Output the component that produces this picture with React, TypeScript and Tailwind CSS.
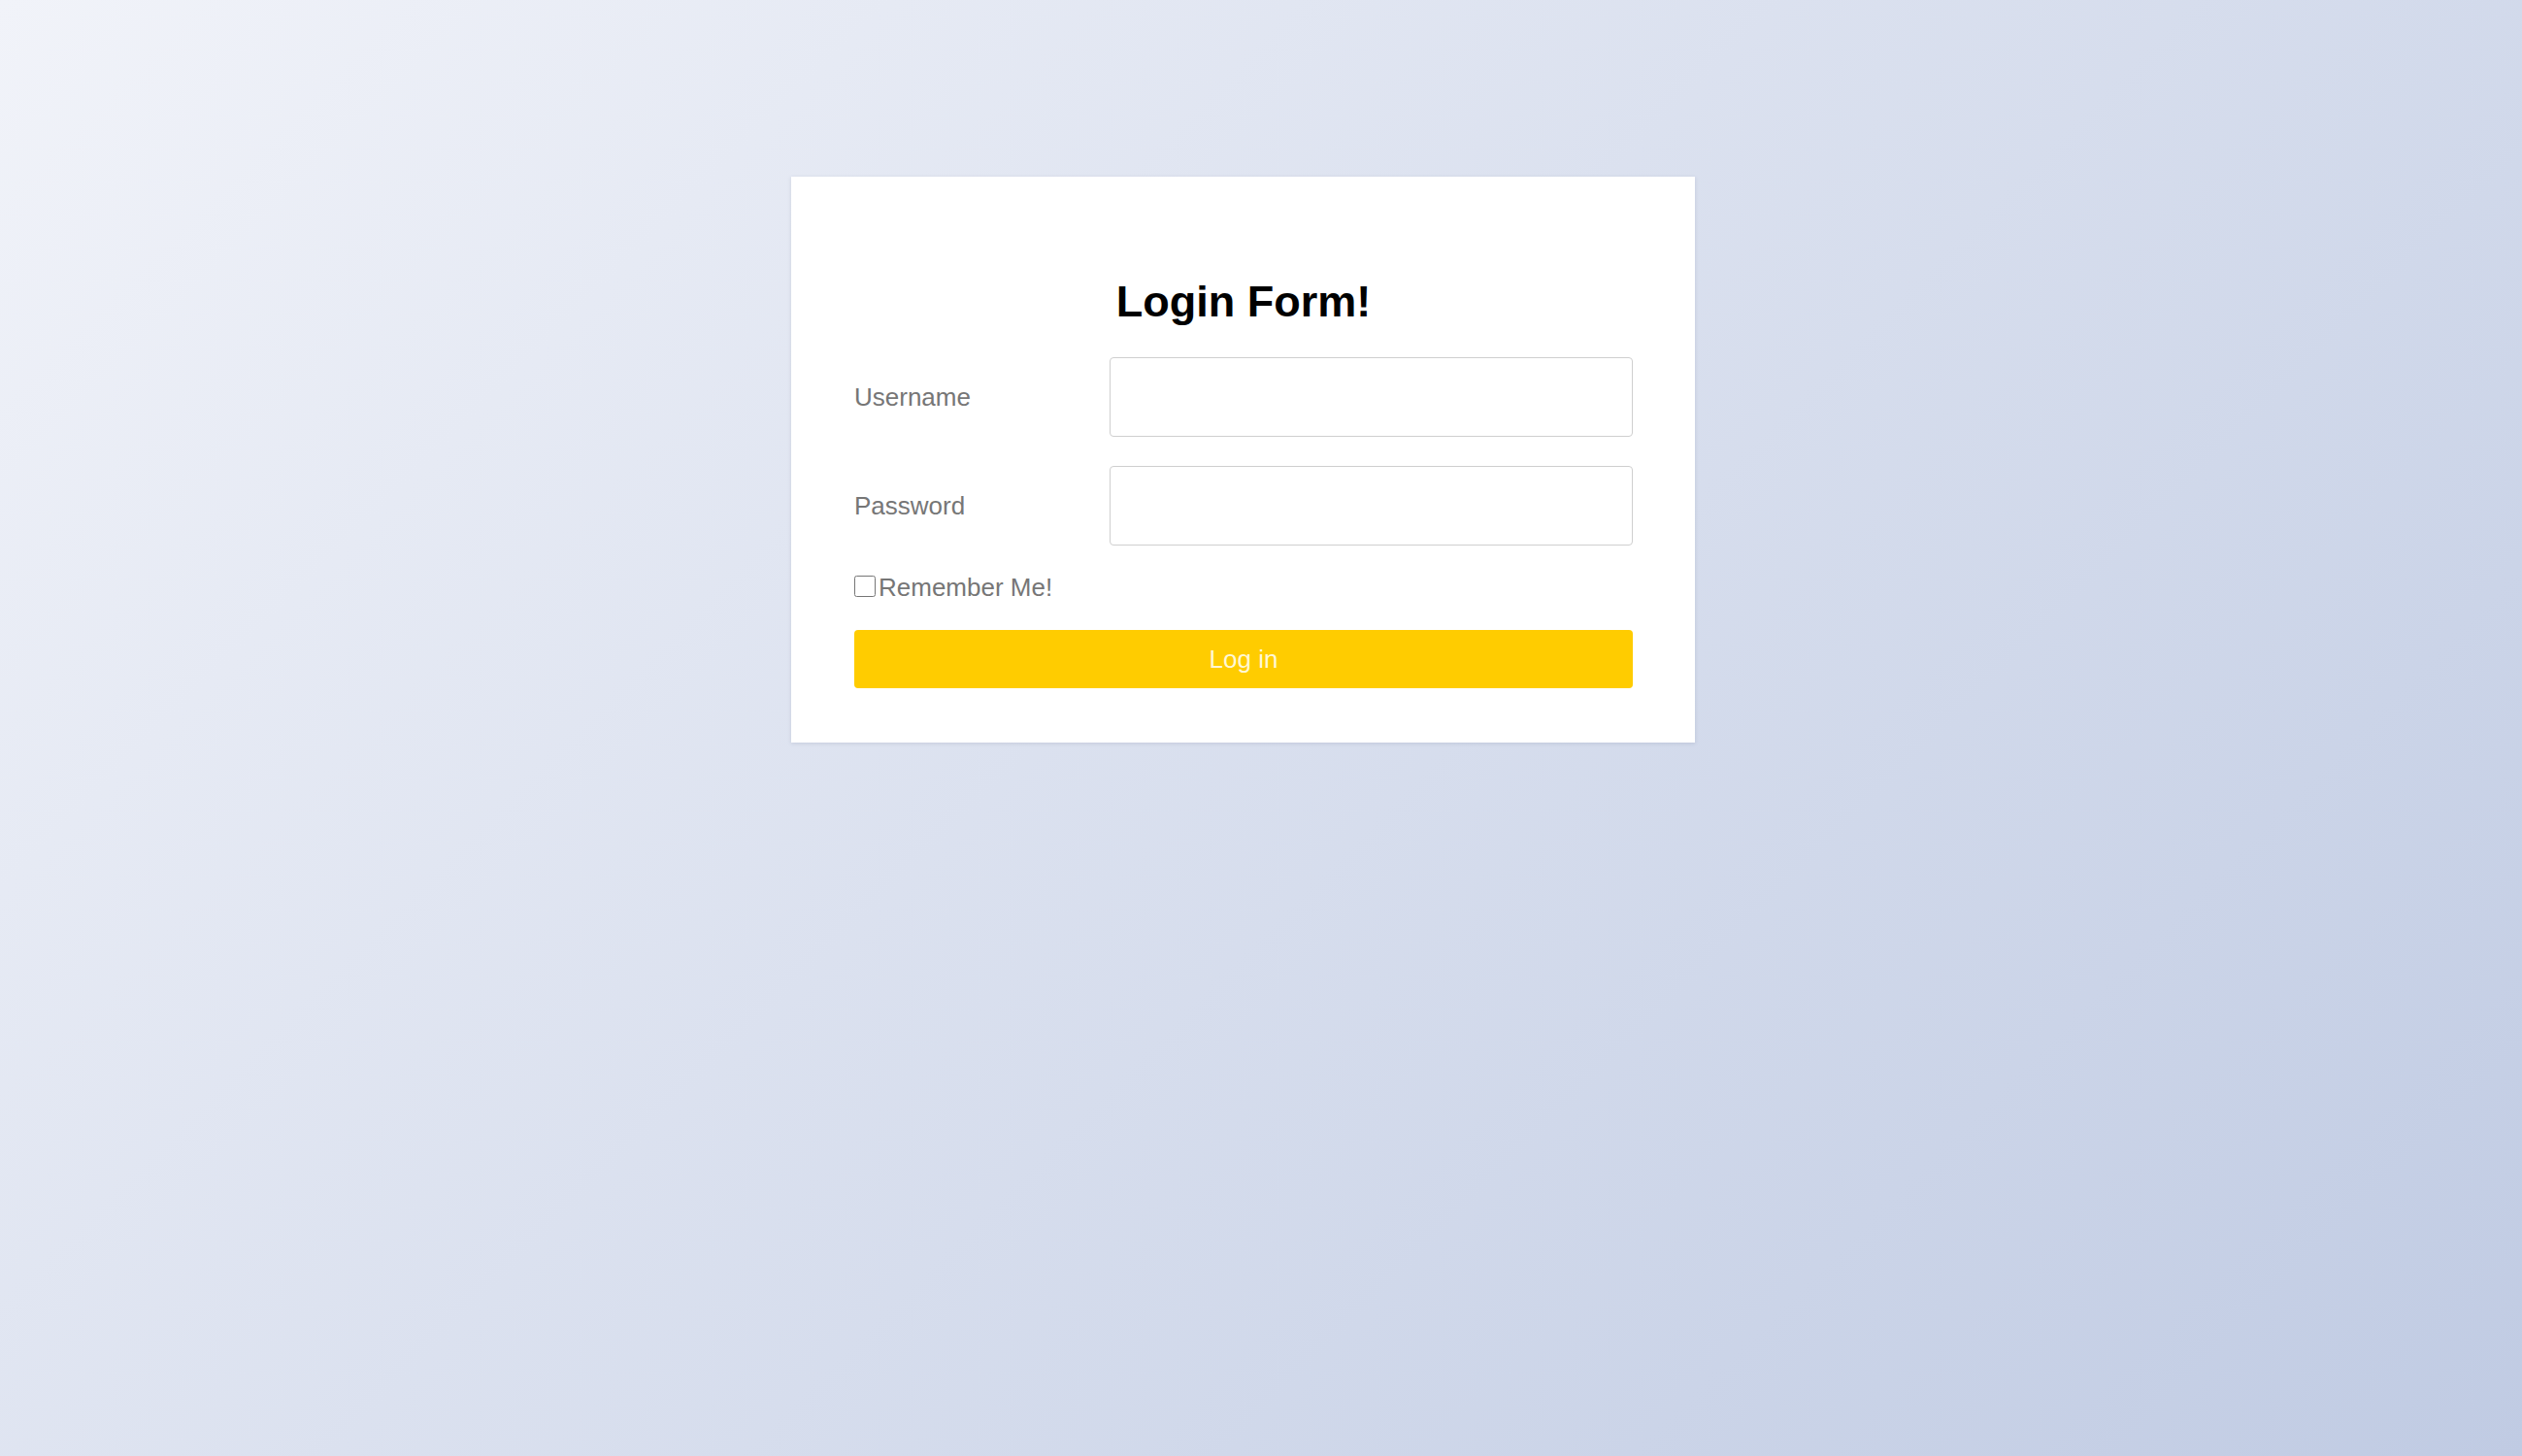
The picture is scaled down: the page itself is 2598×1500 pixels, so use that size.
const LoginPage = () => {
  return (
    <div
      className="min-h-screen w-full flex justify-center items-start pt-[182px] pr-[37px] bg-[linear-gradient(135deg,#f1f3f9_0%,#c0cbe3_100%)]"
      style={{ fontFamily: '"Liberation Sans", Arial, sans-serif' }}
    >
      <form className="w-[931px] bg-white pt-[104px] pl-[65px] pr-[64px] pb-[56px] shadow-[0_1px_4px_rgba(60,70,110,0.15)]">
        <h1 className="text-[45px] leading-[50px] font-bold text-black text-center">
          Login Form!
        </h1>

        <div className="mt-[32px] flex items-center">
          <label className="w-[263px] text-[26px] text-[#767676]">Username</label>
          <input
            type="text"
            className="flex-1 h-[82px] border border-[#cfcfcf] rounded-[4px] px-3 text-[26px] outline-none"
          />
        </div>

        <div className="mt-[30px] flex items-center">
          <label className="w-[263px] text-[26px] text-[#767676]">Password</label>
          <input
            type="password"
            className="flex-1 h-[82px] border border-[#cfcfcf] rounded-[4px] px-3 text-[26px] outline-none"
          />
        </div>

        <label className="mt-[28px] flex items-center h-[30px] text-[26px] text-[#767676]">
          <input type="checkbox" className="w-[22px] h-[22px] m-0 mr-[3px] -mt-[3px]" />
          Remember Me!
        </label>

        <button
          type="button"
          className="mt-[29px] w-full h-[60px] bg-[#ffcc00] text-[#fff8d6] text-[26px] rounded-[4px]"
        >
          Log in
        </button>
      </form>
    </div>
  );
};

export default LoginPage;
